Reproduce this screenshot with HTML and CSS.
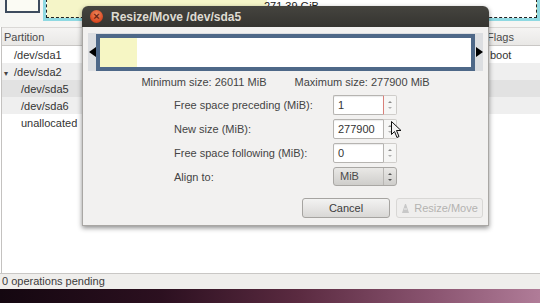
FILE: index.html
```html
<!DOCTYPE html>
<html lang="en">
<head>
  <meta charset="UTF-8">
  <meta name="viewport" content="width=device-width, initial-scale=1.0">
  <title>GParted - Resize/Move</title>
  <link rel="stylesheet" href="styles.css">
</head>
<body>
  <div class="screen">
    <div class="gparted">
      <div class="disk-graph">
        <div class="part part-primary"></div>
        <div class="part part-extended">
          <div class="part-inner"><span class="part-size">271.39 GiB</span></div>
        </div>
      </div>

      <div class="tree">
        <div class="tree-head">
          <span class="col-part">Partition</span>
          <span class="col-flags">Flags</span>
        </div>
        <div class="tree-row">
          <span class="col-part lvl1">/dev/sda1</span>
          <span class="col-flags">boot</span>
        </div>
        <div class="tree-row alt">
          <span class="col-part"><span class="expander">&#9662;</span>/dev/sda2</span>
          <span class="col-flags"></span>
        </div>
        <div class="tree-row selected">
          <span class="col-part lvl2">/dev/sda5</span>
          <span class="col-flags"></span>
        </div>
        <div class="tree-row alt">
          <span class="col-part lvl2">/dev/sda6</span>
          <span class="col-flags"></span>
        </div>
        <div class="tree-row">
          <span class="col-part lvl2">unallocated</span>
          <span class="col-flags"></span>
        </div>
      </div>

      <div class="statusbar">0 operations pending</div>
    </div>
    <div class="wallpaper"></div>

    <!-- modal dialog on top of the main window -->
    <div class="dialog">
      <div class="dialog-title">
        <span class="close-btn">&times;</span>
        <span class="title-text">Resize/Move /dev/sda5</span>
      </div>
      <div class="dialog-body">
        <div class="resizer">
          <span class="arrow arrow-left"></span>
          <div class="resizer-frame">
            <div class="resizer-used"></div>
          </div>
          <span class="arrow arrow-right"></span>
        </div>

        <div class="size-limits">
          <span>Minimum size: 26011 MiB</span>
          <span>Maximum size: 277900 MiB</span>
        </div>

        <div class="form">
          <label>Free space preceding (MiB):</label>
          <div class="spin focused">
            <span class="spin-value">1</span>
            <span class="spin-btns"><i class="up"></i><i class="down"></i></span>
          </div>

          <label>New size (MiB):</label>
          <div class="spin">
            <span class="spin-value">277900</span>
            <span class="spin-btns"><i class="up"></i><i class="down"></i></span>
          </div>

          <label>Free space following (MiB):</label>
          <div class="spin">
            <span class="spin-value">0</span>
            <span class="spin-btns"><i class="up"></i><i class="down"></i></span>
          </div>

          <label>Align to:</label>
          <div class="combo">
            <span class="combo-value">MiB</span>
            <span class="combo-arrows"><i class="up"></i><i class="down"></i></span>
          </div>
        </div>

        <div class="dialog-buttons">
          <button class="button">Cancel</button>
          <button class="button disabled">
            <svg class="btn-icon" width="9" height="11" viewBox="0 0 9 11">
              <path d="M1 10 L4 1 L5 1 L8 10 Z" fill="#c8c8c8"/>
              <path d="M3 6 L6 6" stroke="#efefef" stroke-width="1"/>
            </svg>
            Resize/Move
          </button>
        </div>
      </div>
    </div>

    <svg class="cursor" width="12" height="18" viewBox="0 0 12 18">
      <path d="M0.5 0.5 L0.5 13.5 L3.5 10.5 L6 16.5 L8 15.5 L5.5 9.5 L10 9.5 Z"
            fill="#f4f4f4" stroke="#111" stroke-width="1" stroke-linejoin="round"/>
    </svg>
  </div>
</body>
</html>
```

FILE: styles.css
```css
body {
  margin: 0;
  font-family: "Liberation Sans", Arial, sans-serif;
  font-size: 11px;
  color: #3c3c3c;
}

.screen {
  position: relative;
  width: 540px;
  height: 303px;
  overflow: hidden;
  background: #fff;
}

.gparted {
  display: flex;
  flex-direction: column;
  height: 289px;
  background: #fff;
}

/* disk graph at the top, mostly scrolled out of view */
.disk-graph {
  display: flex;
  align-items: flex-start;
  gap: 3px;
  height: 27px;
  padding-left: 5px;
  background: #f6f6f4;
}

.part {
  box-sizing: border-box;
  margin-top: -20px;
}

.part-primary {
  width: 35px;
  height: 33px;
  border: 2px solid #3d4b5e;
  background: #fbfbf4;
}

.part-extended {
  width: 500px;
  height: 41px;
  border: 3px solid #8fd9e2;
  background: #fff;
}

.part-inner {
  height: 100%;
  box-sizing: border-box;
  border: 1px dashed #222;
  padding-top: 16px;
  text-align: center;
  background: linear-gradient(90deg, #f5f5c8 0, #f5f5c8 45%, #fff 45%);
}

.part-size {
  color: #222;
}

.tree {
  flex: 1;
  margin-left: 1px;
  border-left: 1px solid #c4c2c0;
}

.tree-head,
.tree-row {
  display: grid;
  grid-template-columns: 484px 1fr;
  height: 17px;
  align-items: center;
}

.tree-head {
  height: 17px;
  border-top: 1px solid #dad8d6;
  border-bottom: 1px solid #c9c7c5;
  background: linear-gradient(#f5f4f3, #e9e8e6);
  color: #4a4a4a;
}

.tree-head .col-part { padding-left: 2px; }
.tree-head .col-flags { padding-left: 1px; }

.tree-row { color: #333; }
.tree-row.alt { background: #efefef; }
.tree-row.selected { background: #e2e2e2; }

.col-part { white-space: nowrap; }
.col-flags { padding-left: 4px; }

.lvl1 { padding-left: 12px; }
.lvl2 { padding-left: 19px; }

.expander {
  display: inline-block;
  width: 12px;
  padding-left: 2px;
  box-sizing: border-box;
  font-size: 8px;
  color: #444;
}

.statusbar {
  height: 15px;
  line-height: 15px;
  padding-left: 2px;
  border-top: 1px solid #c9c7c5;
  background: #efeeec;
  color: #3c3c3c;
}

.wallpaper {
  height: 14px;
  background: linear-gradient(90deg, #140710 0%, #2c1020 30%, #5a2a40 55%, #8a5470 80%, #b07c98 100%);
}

/* dialog */
.dialog {
  position: absolute;
  left: 82px;
  top: 6px;
  width: 407px;
  height: 220px;
  display: flex;
  flex-direction: column;
  border-radius: 6px 6px 0 0;
  box-shadow: 0 2px 5px rgba(0, 0, 0, 0.45);
}

.dialog-title {
  display: flex;
  align-items: center;
  height: 21px;
  padding-left: 8px;
  border-radius: 6px 6px 0 0;
  background: linear-gradient(#45443f, #353430);
}

.close-btn {
  width: 13px;
  height: 13px;
  border-radius: 50%;
  background: radial-gradient(circle at 50% 35%, #f08a5e, #d8461f 70%, #a8351a);
  color: #6b2512;
  font-size: 11px;
  font-weight: bold;
  line-height: 13px;
  text-align: center;
}

.title-text {
  margin-left: 8px;
  font-size: 12px;
  font-weight: bold;
  color: #dfdbd2;
}

.dialog-body {
  flex: 1;
  display: flex;
  flex-direction: column;
  padding: 6px 5px 7px;
  border: 1px solid #a9a7a4;
  border-top: none;
  background: #f2f1f0;
}

.resizer {
  display: flex;
  align-items: center;
  height: 38px;
  background: #dcdee1;
}

.arrow {
  width: 8px;
  display: flex;
  justify-content: center;
}

.arrow-left::before,
.arrow-right::before {
  content: "";
  border-top: 5px solid transparent;
  border-bottom: 5px solid transparent;
}

.arrow-left::before { border-right: 7px solid #000; }
.arrow-right::before { border-left: 7px solid #000; }

.resizer-frame {
  flex: 1;
  height: 37px;
  box-sizing: border-box;
  border: 4px solid #4e6888;
  background: #fff;
  display: flex;
}

.resizer-used {
  width: 37px;
  background: #f6f6c4;
}

.size-limits {
  display: flex;
  justify-content: center;
  gap: 28px;
  margin-top: 5px;
  line-height: 12px;
  color: #444;
}

.form {
  display: grid;
  grid-template-columns: 147px 64px;
  column-gap: 12px;
  row-gap: 4px;
  justify-content: center;
  align-items: center;
  margin-top: 7px;
}

.form label {
  color: #444;
  white-space: nowrap;
}

.spin {
  display: flex;
  height: 20px;
}

.spin-value {
  flex: 1;
  box-sizing: border-box;
  padding-left: 4px;
  line-height: 18px;
  border: 1px solid #b6b4b1;
  border-radius: 2px 0 0 2px;
  background: #fff;
  color: #333;
  box-shadow: inset 0 1px 1px rgba(0, 0, 0, 0.08);
}

.spin.focused .spin-value {
  border-right-color: #d8807a;
}

.spin-btns,
.combo-arrows {
  width: 12px;
  display: flex;
  flex-direction: column;
  justify-content: center;
  align-items: center;
  gap: 4px;
}

.spin-btns {
  border: 1px solid #cfcdca;
  border-left: none;
  border-radius: 0 2px 2px 0;
  background: #f6f6f5;
}

.up, .down {
  display: block;
  border-left: 2px solid transparent;
  border-right: 2px solid transparent;
}

.up { border-bottom: 2px solid #8a8a8a; }
.down { border-top: 2px solid #b0b0b0; }

.combo {
  display: flex;
  height: 19px;
  box-sizing: border-box;
  border: 1px solid #a9a7a4;
  border-radius: 3px;
  background: linear-gradient(#e9e8e6, #cfcecb);
}

.combo-value {
  flex: 1;
  padding-left: 6px;
  line-height: 17px;
  color: #4a4a4a;
  border-right: 1px solid #b8b6b3;
}

.combo-arrows .up { border-bottom-color: #555; }
.combo-arrows .down { border-top-color: #555; }

.dialog-buttons {
  display: flex;
  justify-content: flex-end;
  gap: 6px;
  margin-top: auto;
}

.button {
  width: 88px;
  height: 20px;
  padding: 0;
  font-family: inherit;
  font-size: 11px;
  color: #3c3c3c;
  border: 1px solid #a6a4a1;
  border-radius: 3px;
  background: linear-gradient(#f3f3f2, #d9d8d6);
}

.button.disabled {
  width: 87px;
  display: flex;
  align-items: center;
  justify-content: center;
  gap: 4px;
  color: #b4b3b1;
  border-color: #d8d7d5;
  background: #efeeed;
}

.cursor {
  position: absolute;
  left: 391px;
  top: 121px;
}
```
